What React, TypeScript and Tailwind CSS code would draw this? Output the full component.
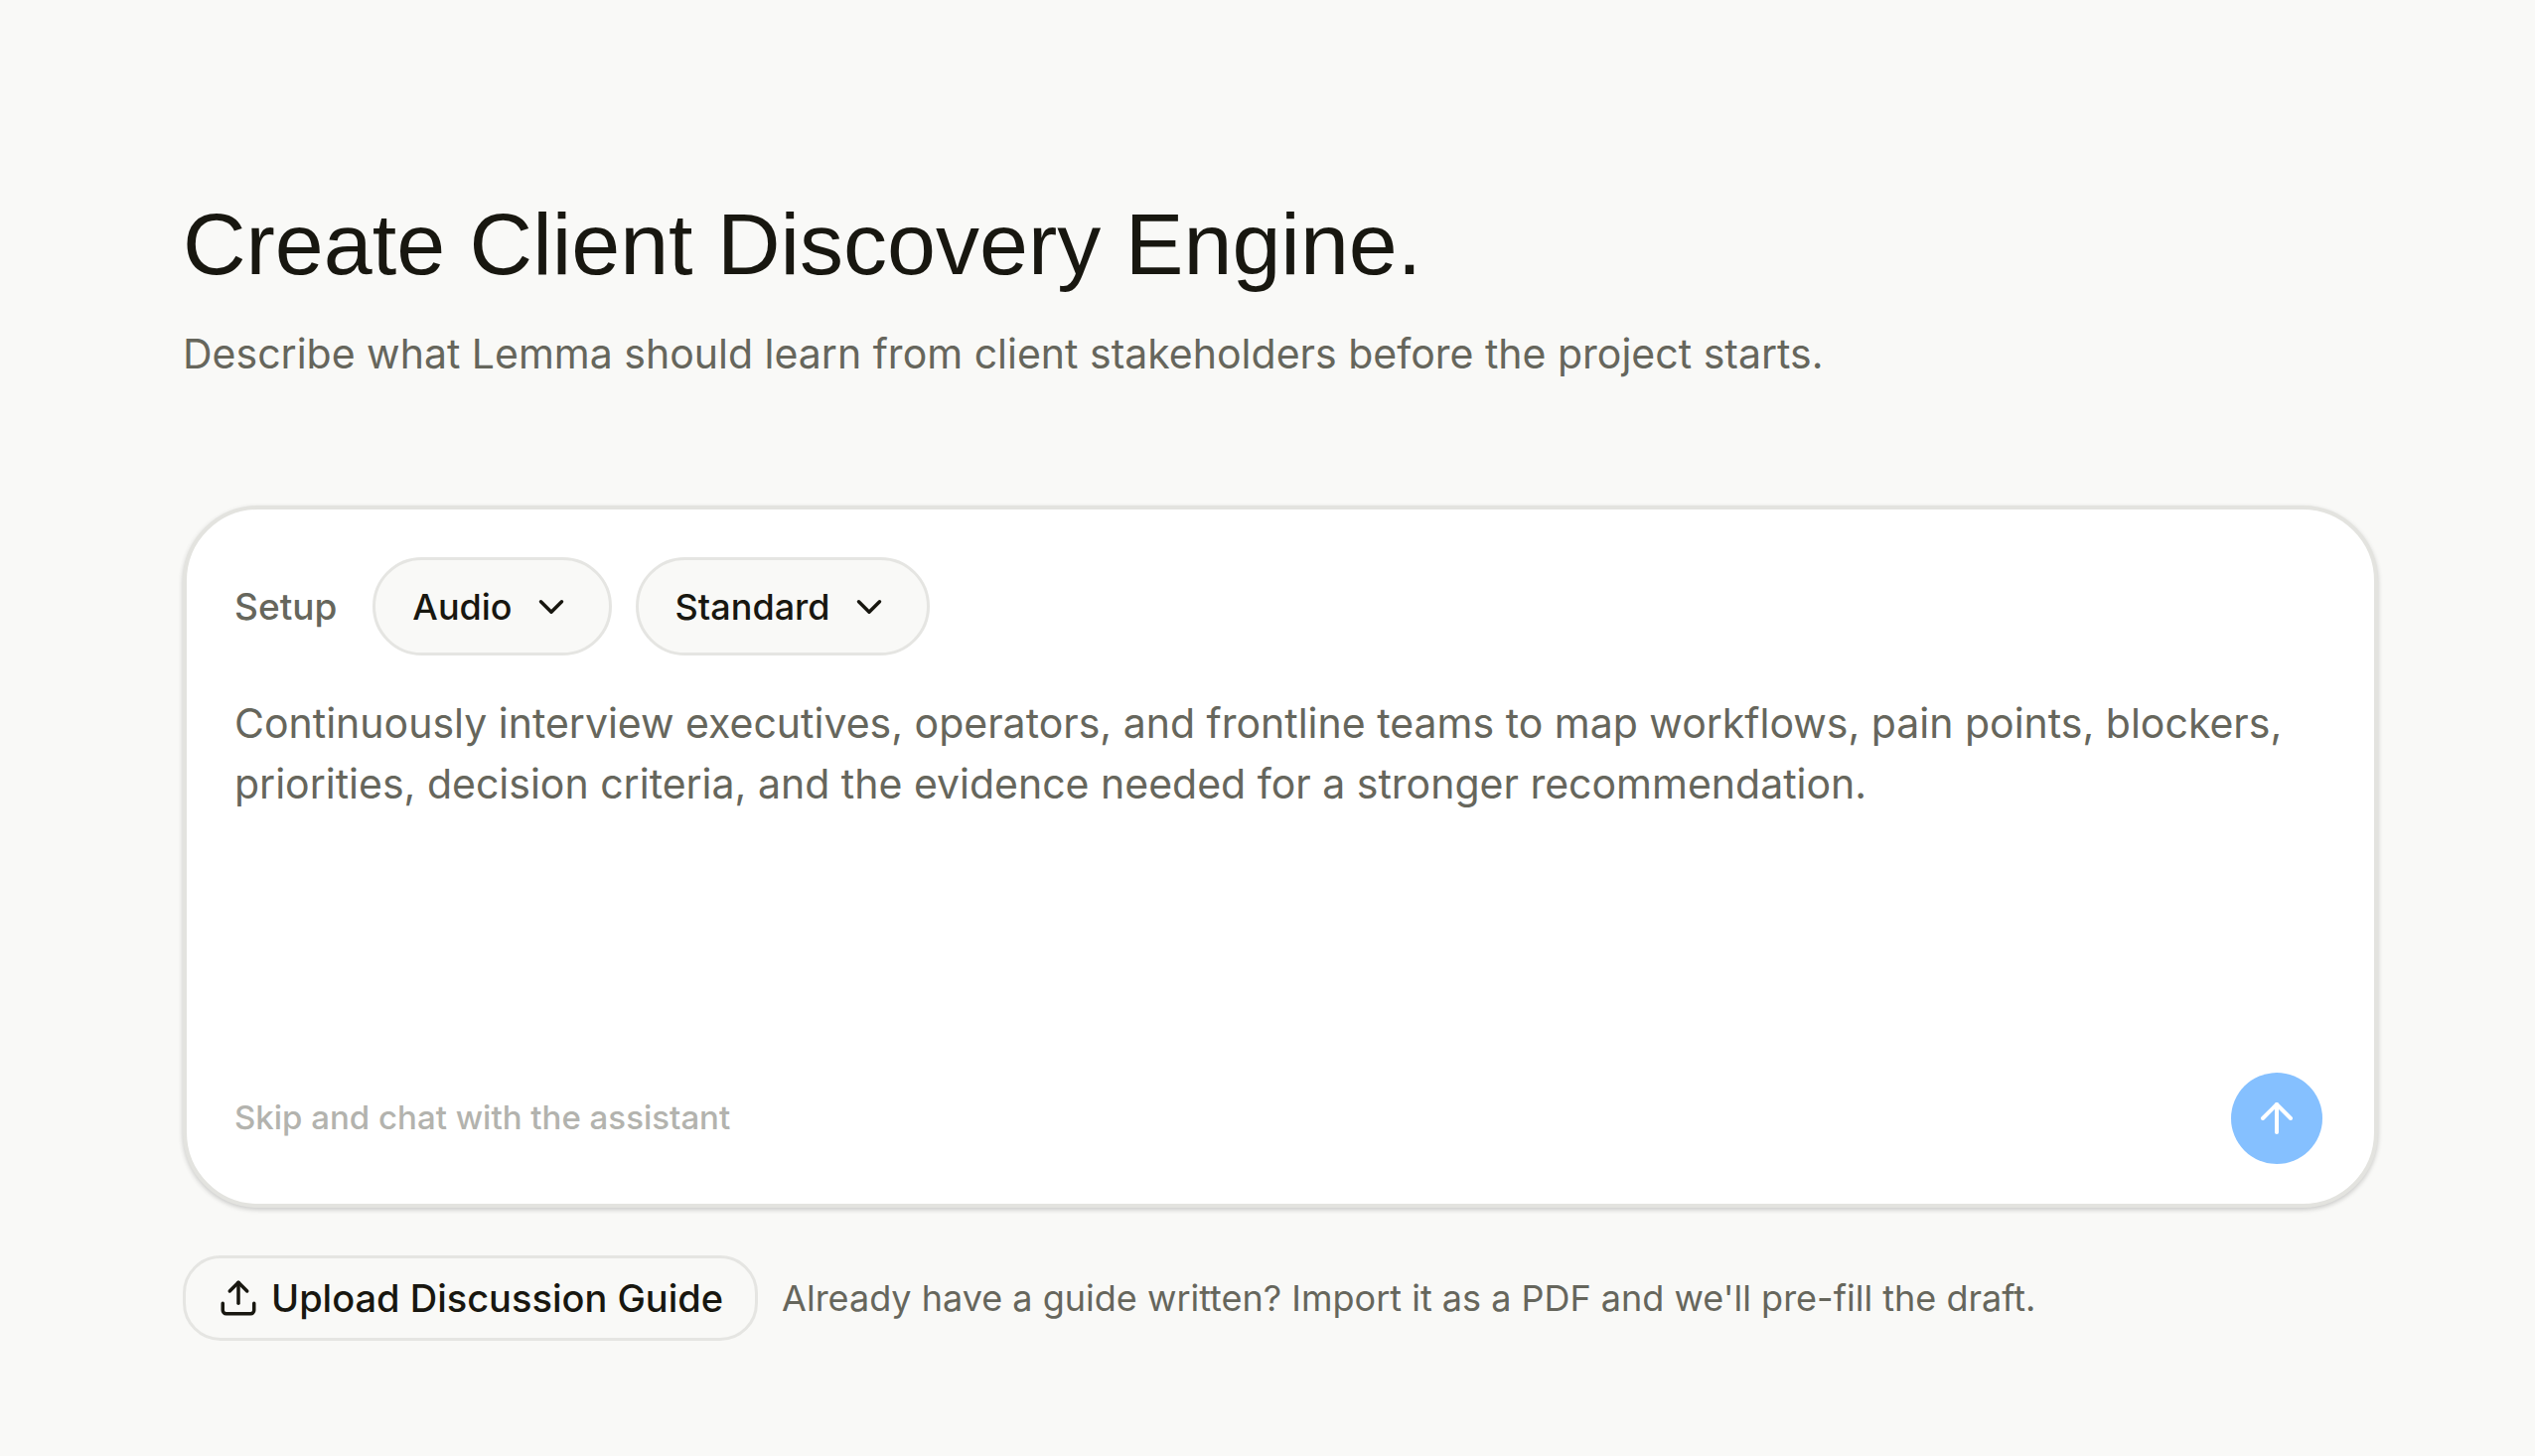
import { ArrowUp, ChevronDown, Upload } from "lucide-react";

type SetupSelectProps = { id: string; label?: string; options: string[] };

function SetupSelect({ id, label, options }: SetupSelectProps) {
  return (
    <div className="relative">
      <select
        id={id}
        aria-label={label}
        className="field-sizing-content h-[99px] appearance-none rounded-full border-3 border-[#e5e5e2] bg-[#f9f9f7] pr-[97px] pl-[37px] text-[36px] font-medium text-[#181710] outline-none"
      >
        {options.map((option) => (
          <option key={option}>{option}</option>
        ))}
      </select>
      <ChevronDown className="pointer-events-none absolute inset-y-0 right-10 my-auto size-[42px] text-[#181710]" />
    </div>
  );
}

export default function App() {
  return (
    <main className="min-h-screen bg-[#f9f9f7] pt-[196px] pr-[158px] pb-[115px] pl-[184px] font-['Inter',sans-serif]">
      <header>
        <h1 className="font-['Liberation_Sans',sans-serif] text-[88px] leading-[100px] text-[#181710]">
          Create Client Discovery Engine.
        </h1>
        <p className="mt-8 text-[41px] leading-[56px] text-[#66665c]">
          Describe what Lemma should learn from client stakeholders before the project starts.
        </p>
      </header>

      <form className="mt-[125px] flex flex-col rounded-[76px] border-4 border-[#e3e3df] bg-white px-12 pt-12 pb-10 shadow-[0_2px_5px_rgba(0,0,0,0.2)]">
        <div className="flex items-center gap-6">
          <label htmlFor="mode" className="mr-3 text-[37px] font-medium text-[#66665c]">
            Setup
          </label>
          <SetupSelect id="mode" options={["Audio", "Video", "Text"]} />
          <SetupSelect id="depth" label="Depth" options={["Standard", "Deep"]} />
        </div>
        <textarea
          aria-label="Description"
          placeholder="Continuously interview executives, operators, and frontline teams to map workflows, pain points, blockers, priorities, decision criteria, and the evidence needed for a stronger recommendation."
          className="mt-[38px] h-[382px] w-full resize-none text-[41px] leading-[61px] text-[#181710] outline-none placeholder:text-[#66665c]"
        />
        <div className="flex items-center justify-between">
          <button type="button" className="text-[33px] font-medium text-[#b3b3ae]">
            Skip and chat with the assistant
          </button>
          <button
            type="submit"
            aria-label="Send"
            className="mr-1 flex size-[92px] items-center justify-center rounded-full bg-[#85c0ff] text-white"
          >
            <ArrowUp className="size-12" />
          </button>
        </div>
      </form>

      <div className="mt-12 flex items-center gap-6">
        <button
          type="button"
          className="flex h-[86px] items-center gap-3 rounded-[38px] border-3 border-[#e5e5e2] px-8 text-[38px] font-medium text-[#181710]"
        >
          <Upload className="size-[42px]" />
          Upload Discussion Guide
        </button>
        <p className="text-[36px] text-[#66665c]">
          Already have a guide written? Import it as a PDF and we'll pre-fill the draft.
        </p>
      </div>
    </main>
  );
}
